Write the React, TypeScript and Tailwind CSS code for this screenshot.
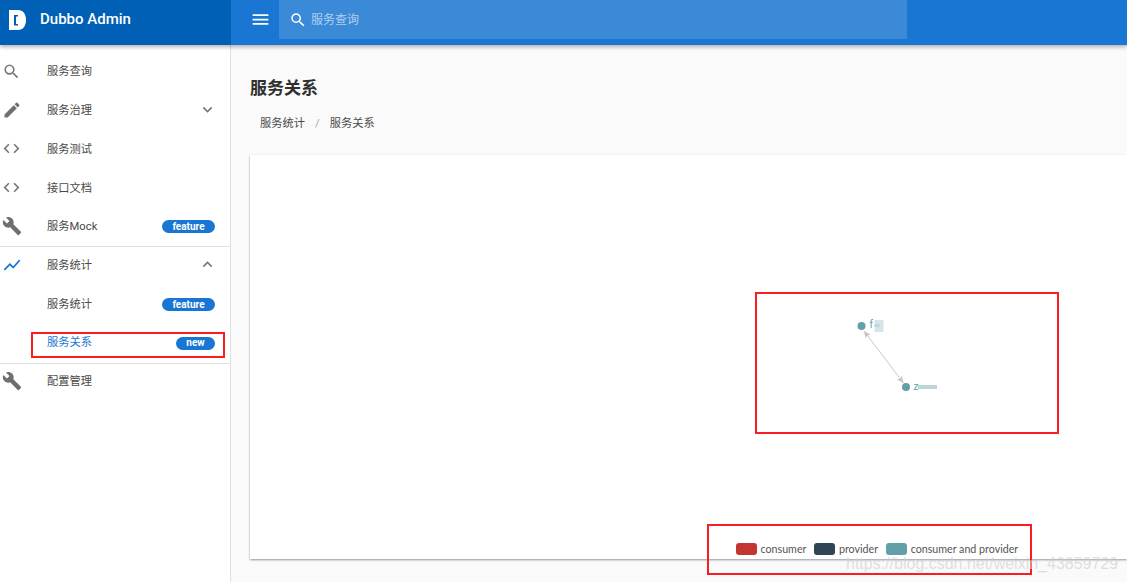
import React from 'react';
import {
  MdSearch,
  MdEdit,
  MdCode,
  MdBuild,
  MdShowChart,
  MdKeyboardArrowDown,
  MdKeyboardArrowUp,
  MdMenu,
} from 'react-icons/md';

const fontStack = { fontFamily: '"Roboto", "Noto Sans CJK SC", sans-serif' };

const Badge: React.FC<{ label: string; wide?: boolean }> = ({ label, wide }) => (
  <span className={`-mt-[1px] flex h-[13px] items-center justify-center rounded-full bg-[#1976d2] text-[10px] font-bold leading-none text-white ${wide ? 'w-[53px]' : 'w-[39px]'}`}>
    {label}
  </span>
);

const NavRow: React.FC<{
  icon?: React.ReactNode;
  label: string;
  trailing?: React.ReactNode;
  active?: boolean;
  divided?: boolean;
}> = ({ icon, label, trailing, active, divided }) => (
  <div className={`flex h-[38.75px] items-center pr-[15px] ${divided ? 'border-b border-[#e0e0e0]' : ''}`}>
    <div className="-mt-[3px] flex w-[47px] shrink-0 items-center pl-[2px]">{icon}</div>
    <span className={`flex-1 text-[11.25px] ${active ? 'text-[#1976d2]' : 'text-[#4a4a4a]'}`}>{label}</span>
    {trailing}
  </div>
);

const Sidebar = () => (
  <aside className="flex w-[231px] shrink-0 flex-col border-r border-[#e0e0e0] bg-white pt-[8.5px]">
    <NavRow icon={<MdSearch size={19} className="text-[#7a7a7a]" />} label="服务查询" />
    <NavRow
      icon={<MdEdit size={20} className="text-[#6f6f6f]" />}
      label="服务治理"
      trailing={<MdKeyboardArrowDown size={19} className="-mt-[4px] mr-[-2px] text-[#757575]" />}
    />
    <NavRow icon={<MdCode size={19} className="text-[#757575]" />} label="服务测试" />
    <NavRow icon={<MdCode size={19} className="text-[#757575]" />} label="接口文档" />
    <NavRow icon={<MdBuild size={20} className="text-[#6f6f6f]" />} label="服务Mock" trailing={<Badge label="feature" wide />} divided />
    <NavRow
      icon={<MdShowChart size={20} className="text-[#1976d2]" />}
      label="服务统计"
      trailing={<MdKeyboardArrowUp size={19} className="-mt-[4px] mr-[-2px] text-[#757575]" />}
    />
    <NavRow label="服务统计" trailing={<Badge label="feature" wide />} />
    <NavRow label="服务关系" active trailing={<Badge label="new" />} divided />
    <NavRow icon={<MdBuild size={20} className="text-[#6f6f6f]" />} label="配置管理" />
  </aside>
);

const Graph = () => (
  <svg className="absolute left-[600px] top-[161px] h-[90px] w-[100px]" viewBox="0 0 100 90">
    <defs>
      <marker id="arrow" markerWidth="8" markerHeight="8" refX="7" refY="4" orient="auto-start-reverse">
        <path d="M0 0.8 L7 4 L0 7.2 L1.8 4 Z" fill="#c4c4c4" />
      </marker>
    </defs>
    <line x1="14" y1="15" x2="53.5" y2="67" stroke="#c8c8c8" strokeWidth="1" markerStart="url(#arrow)" markerEnd="url(#arrow)" />
    <circle cx="11.5" cy="10" r="4" fill="#61a0a8" />
    <circle cx="56" cy="71" r="4" fill="#61a0a8" />
    {/* blurred-out node names */}
    <rect x="24.5" y="4" width="9" height="12" fill="#d6e6e8" />
    <rect x="24.5" y="8" width="5" height="3" fill="#bcd6d9" />
    <rect x="68" y="69" width="19" height="4" fill="#bcd6d9" />
    <text x="19.5" y="12" fontSize="10" fill="#61a0a8">f</text>
    <text x="63.5" y="74" fontSize="10" fill="#61a0a8">z</text>
  </svg>
);

const LegendItem: React.FC<{ color: string; label: string }> = ({ color, label }) => (
  <div className="flex items-center gap-[3.5px]">
    <span className={`h-[12px] w-[21px] rounded-[3px] ${color}`} />
    <span className="text-[10.7px] leading-none text-[#555]" style={{ fontFamily: '"Lato", sans-serif' }}>{label}</span>
  </div>
);

export default function App() {
  return (
    <div className="relative flex h-[582px] w-[1127px] flex-col overflow-hidden bg-[#fafafa]" style={fontStack}>
      <header className="z-10 flex h-[45px] shrink-0 bg-[#1976d2] shadow-[0_2px_4px_rgba(0,0,0,0.3)]">
        <div className="flex w-[231px] shrink-0 items-center gap-[14px] bg-[#0060b6] pb-[6px] pl-[9px]">
          <svg width="17" height="20" viewBox="0 0 17 20">
            <path d="M0 0 H9 C14 0 17 4 17 10 C17 16 14 20 9 20 H0 Z" fill="#fff" />
            <path d="M5 5 H9 V6.5 H7 V14 H9 V15.5 H5 Z" fill="#0060b6" />
          </svg>
          <span className="text-[15px] font-medium text-white">Dubbo Admin</span>
        </div>
        <div className="flex flex-1 items-start">
          <div className="flex h-[39px] w-[48px] items-center justify-center pl-[10px]">
            <MdMenu size={21} className="text-white" />
          </div>
          <div className="flex h-[39px] w-[628px] items-center gap-[4px] bg-white/15 pl-[10px]">
            <MdSearch size={18} className="text-white" />
            <span className="text-[12px] text-white/60">服务查询</span>
          </div>
        </div>
      </header>
      <div className="flex flex-1">
        <Sidebar />
        <main className="flex flex-1 flex-col pl-[19px]">
          <h1 className="mt-[31px] text-[17px] font-bold leading-[24px] text-[#2f2f2f]">服务关系</h1>
          <div className="mt-[15px] flex items-center pl-[10px] text-[11.25px] leading-[18px] text-[#4a4a4a]">
            <span>服务统计</span>
            <span className="mx-[10px] text-[#aaa]">/</span>
            <span>服务关系</span>
          </div>
          <section className="relative mt-[22px] h-[404px] flex-none bg-white shadow-[0_1px_2px_rgba(0,0,0,0.4)]">
            <Graph />
            <div className="absolute bottom-[4px] left-[486px] flex items-center gap-[8px]">
              <LegendItem color="bg-[#c23531]" label="consumer" />
              <LegendItem color="bg-[#2f4554]" label="provider" />
              <LegendItem color="bg-[#61a0a8]" label="consumer and provider" />
            </div>
          </section>
        </main>
      </div>

      {/* red annotation boxes drawn over the screenshot */}
      <div className="absolute left-[31px] top-[332px] h-[26px] w-[194px] border-2 border-[#fb1c22]" />
      <div className="absolute left-[755px] top-[292px] h-[142px] w-[304px] border-2 border-[#fb1c22]" />
      <div className="absolute left-[707px] top-[524px] h-[51px] w-[325px] border-2 border-[#fb1c22]" />

      <span className="absolute left-[846px] top-[554px] text-[16px] leading-[20px] text-[#d2d2d2]/70" style={{ fontFamily: '"Liberation Sans", sans-serif' }}>
        https://blog.csdn.net/weixin_43859729
      </span>
    </div>
  );
}
